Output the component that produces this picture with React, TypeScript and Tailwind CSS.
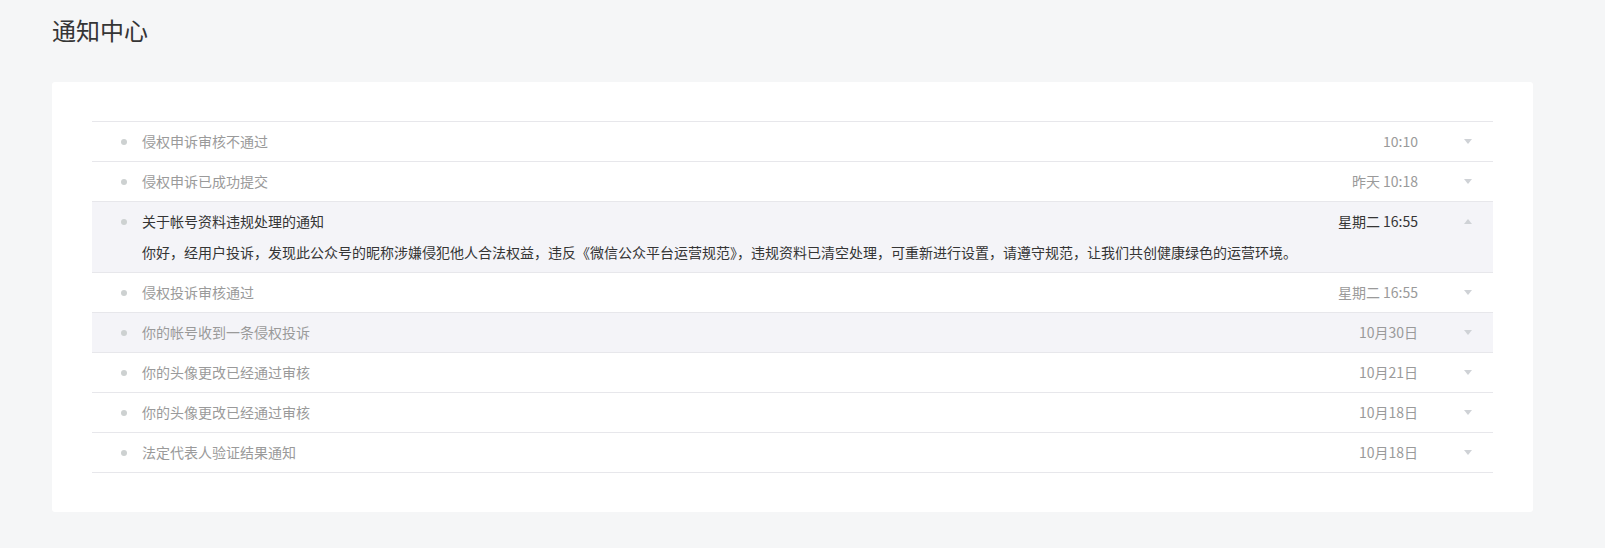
import { useState } from "react";

const items = [
  { title: "侵权申诉审核不通过", time: "10:10" },
  { title: "侵权申诉已成功提交", time: "昨天 10:18" },
  {
    title: "关于帐号资料违规处理的通知",
    time: "星期二 16:55",
    content:
      "你好，经用户投诉，发现此公众号的昵称涉嫌侵犯他人合法权益，违反《微信公众平台运营规范》，违规资料已清空处理，可重新进行设置，请遵守规范，让我们共创健康绿色的运营环境。",
  },
  { title: "侵权投诉审核通过", time: "星期二 16:55" },
  { title: "你的帐号收到一条侵权投诉", time: "10月30日" },
  { title: "你的头像更改已经通过审核", time: "10月21日" },
  { title: "你的头像更改已经通过审核", time: "10月18日" },
  { title: "法定代表人验证结果通知", time: "10月18日" },
];

function Arrow({ up }: { up?: boolean }) {
  return (
    <svg width="8" height="5" viewBox="0 0 8 5" className="block">
      {up ? (
        <path d="M4 0 L8 5 L0 5 Z" fill="#cfd2d6" />
      ) : (
        <path d="M0 0 L8 0 L4 5 Z" fill="#cfd2d6" />
      )}
    </svg>
  );
}

export default function App() {
  const [open, setOpen] = useState(2);
  const hovered = 4;

  return (
    <div
      className="min-h-[548px] bg-[#f5f6f7] pl-[52px] pr-[72px] pt-[14px] pb-[36px]"
      style={{ fontFamily: '"Noto Sans CJK SC", "Noto Sans", sans-serif' }}
    >
      <h1 className="text-[24px] leading-[32px] text-[#353535] font-normal">通知中心</h1>

      {/* card */}
      <div className="mt-[36px] bg-white rounded-[3px] px-[40px] pt-[39px] pb-[39px]">
        <ul className="border-t border-[#e7e7eb]">
          {items.map((item, i) => {
            const isOpen = open === i;
            const bg = isOpen || i === hovered ? "bg-[#f4f4f8]" : "bg-white";
            return (
              <li key={i} className={`border-b border-[#e7e7eb] ${bg}`}>
                <div
                  className="flex h-[39px] items-center cursor-pointer"
                  onClick={() => setOpen(isOpen ? -1 : i)}
                >
                  <span className="ml-[29px] h-[6px] w-[6px] rounded-full bg-[#cdd1d1]" />
                  <span
                    className={`ml-[15px] flex-1 text-[14px] ${
                      isOpen ? "text-[#353535]" : "text-[#9a9a9a]"
                    }`}
                  >
                    {item.title}
                  </span>
                  <span
                    className={`text-[14px] ${isOpen ? "text-[#353535]" : "text-[#9a9a9a]"}`}
                  >
                    {item.time}
                  </span>
                  <span className="ml-[46px] mr-[21px]">
                    <Arrow up={isOpen} />
                  </span>
                </div>
                {isOpen && item.content && (
                  <p className="pl-[50px] pr-[60px] pb-[9px] text-[14px] leading-[22px] text-[#353535]">
                    {item.content}
                  </p>
                )}
              </li>
            );
          })}
        </ul>
      </div>
    </div>
  );
}
